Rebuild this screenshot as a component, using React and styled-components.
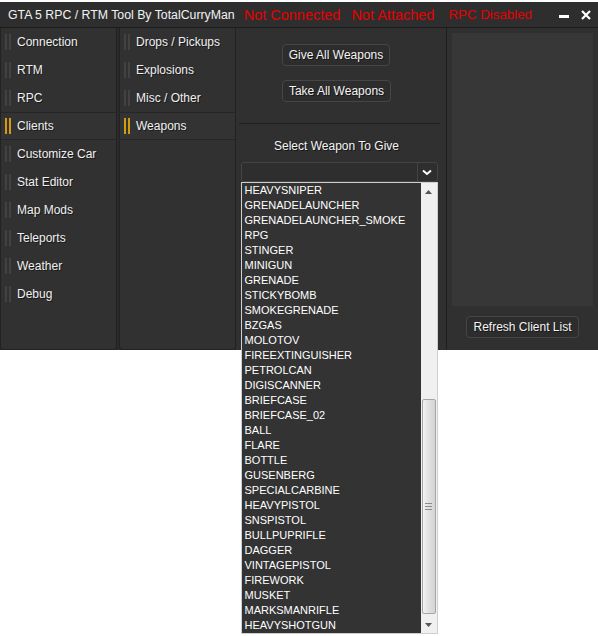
import React from 'react';
import styled, { createGlobalStyle } from 'styled-components';

const GlobalStyle = createGlobalStyle`
  html, body {
    margin: 0;
    padding: 0;
    background: #ffffff;
  }
  body {
    font-family: "Liberation Sans", Arial, sans-serif;
  }
`;

const Page = styled.div`
  min-height: 636px;
  padding-top: 2px;
  box-sizing: border-box;
  background: #ffffff;
`;

const Window = styled.div`
  position: relative;
  width: 598px;
  height: 348px;
  background: #2a2a2a;
  display: flex;
  flex-direction: column;
`;

const TitleBar = styled.div`
  height: 25px;
  display: flex;
  align-items: center;
  padding-left: 8px;
  background: #2e2e2e;
  border-bottom: 1px solid #1c1c1c;
  color: #f2f2f2;
  font-size: 12.3px;
`;

const Title = styled.span`
  margin-right: 9px;
  white-space: nowrap;
`;

const Status = styled.span`
  color: #e60000;
  font-size: ${(p) => p.$size || 14.5}px;
  margin-right: ${(p) => p.$mr || 0}px;
  white-space: nowrap;
`;

const WinControls = styled.div`
  margin-left: auto;
  display: flex;
  align-items: center;
  gap: 12px;
  padding-right: 7px;
`;

const Body = styled.div`
  flex: 1;
  display: flex;
`;

const NavPanel = styled.div`
  width: 115px;
  margin-right: ${(p) => p.$mr || 0}px;
  background: #313131;
  border: 1px solid #222222;
  border-top: none;
  border-radius: 0 0 4px 4px;
  display: flex;
  flex-direction: column;
`;

const NavItem = styled.div`
  height: 28px;
  box-sizing: border-box;
  display: flex;
  align-items: center;
  padding-left: 4px;
  color: #f0f0f0;
  font-size: 12px;
  white-space: nowrap;
  text-shadow: 1px 1px 0 #1a1a1a;
  background: ${(p) => (p.$active ? '#333333' : 'transparent')};
  border-top: 1px solid ${(p) => (p.$active ? '#262626' : 'transparent')};
  border-bottom: 1px solid ${(p) => (p.$active ? '#262626' : 'transparent')};
`;

const Bars = styled.span`
  display: flex;
  gap: 2px;
  margin-right: 6px;
  span {
    width: 2px;
    height: 16px;
    background: ${(p) => (p.$active ? '#d39b12' : '#424242')};
  }
`;

const Main = styled.div`
  width: 211px;
  border-right: 1px solid #1e1e1e;
  background: #303030;
  display: flex;
  flex-direction: column;
  align-items: center;
  padding: 16px 9px 0 5px;
  box-sizing: border-box;
`;

const Button = styled.div`
  height: 22px;
  box-sizing: border-box;
  padding: 0 6px;
  display: flex;
  align-items: center;
  background: #2d2d2d;
  border: 1px solid #464646;
  border-radius: 4px;
  color: #f4f4f4;
  font-size: 12px;
  text-shadow: 1px 1px 0 #151515;
  margin-top: ${(p) => p.$mt || 0}px;
  margin-right: ${(p) => p.$shift || 0}px;
  white-space: nowrap;
`;

const Separator = styled.div`
  width: 201px;
  height: 1px;
  background: #1f1f1f;
  margin-top: 21px;
`;

const Label = styled.div`
  margin-top: 15px;
  margin-right: 5px;
  line-height: 14px;
  color: #f4f4f4;
  font-size: 12px;
  text-shadow: 1px 1px 0 #151515;
`;

const ComboWrap = styled.div`
  position: relative;
  margin-top: 9px;
  width: 197px;
`;

const Combo = styled.div`
  height: 20px;
  box-sizing: border-box;
  display: flex;
  background: #2e2e2e;
  border: 1px solid #444444;
  border-radius: 3px;
`;

const ComboField = styled.div`
  flex: 1;
  border-right: 1px solid #444444;
`;

const ComboButton = styled.div`
  width: 19px;
  display: flex;
  align-items: center;
  justify-content: center;
`;

const DropList = styled.div`
  position: absolute;
  left: 0;
  top: 20px;
  width: 197px;
  height: 452px;
  box-sizing: border-box;
  border: 1px solid #cfcfcf;
  background: #333333;
  display: flex;
  z-index: 5;
`;

const Items = styled.div`
  flex: 1;
  overflow: hidden;
`;

const Item = styled.div`
  height: 15px;
  line-height: 15px;
  padding-left: 3px;
  color: #ffffff;
  font-size: 11px;
  white-space: nowrap;
`;

const ScrollBar = styled.div`
  width: 16px;
  background: #f0f0f0;
  display: flex;
  flex-direction: column;
  align-items: center;
`;

const Arrow = styled.div`
  height: 17px;
  display: flex;
  align-items: center;
  justify-content: center;
`;

const Track = styled.div`
  flex: 1;
  width: 100%;
  display: flex;
  flex-direction: column;
`;

const Thumb = styled.div`
  margin-top: ${(p) => p.$top}px;
  height: ${(p) => p.$h}px;
  width: 14px;
  margin-left: 1px;
  box-sizing: border-box;
  border: 1px solid #a6a6a6;
  border-radius: 2px;
  background: linear-gradient(to right, #f2f2f2, #e0e0e0 50%, #d4d4d4);
  display: flex;
  align-items: center;
  justify-content: center;
`;

const RightPanel = styled.div`
  flex: 1;
  display: flex;
  flex-direction: column;
  align-items: center;
  padding: 5px 5px 0 5px;
  background: #303030;
`;

const ClientBox = styled.div`
  align-self: stretch;
  height: 273px;
  background: #373737;
`;

const menu1 = ['Connection', 'RTM', 'RPC', 'Clients', 'Customize Car', 'Stat Editor', 'Map Mods', 'Teleports', 'Weather', 'Debug'];
const menu2 = ['Drops / Pickups', 'Explosions', 'Misc / Other', 'Weapons'];
const weapons = [
  'HEAVYSNIPER', 'GRENADELAUNCHER', 'GRENADELAUNCHER_SMOKE', 'RPG', 'STINGER', 'MINIGUN', 'GRENADE',
  'STICKYBOMB', 'SMOKEGRENADE', 'BZGAS', 'MOLOTOV', 'FIREEXTINGUISHER', 'PETROLCAN', 'DIGISCANNER',
  'BRIEFCASE', 'BRIEFCASE_02', 'BALL', 'FLARE', 'BOTTLE', 'GUSENBERG', 'SPECIALCARBINE', 'HEAVYPISTOL',
  'SNSPISTOL', 'BULLPUPRIFLE', 'DAGGER', 'VINTAGEPISTOL', 'FIREWORK', 'MUSKET', 'MARKSMANRIFLE', 'HEAVYSHOTGUN',
];

function Nav({ items, active, mr }) {
  return (
    <NavPanel $mr={mr}>
      {items.map((name) => (
        <NavItem key={name} $active={name === active}>
          <Bars $active={name === active}>
            <span />
            <span />
          </Bars>
          {name}
        </NavItem>
      ))}
    </NavPanel>
  );
}

export default function App() {
  return (
    <Page>
      <GlobalStyle />
      <Window>
        <TitleBar>
          <Title>GTA 5 RPC / RTM Tool By TotalCurryMan</Title>
          <Status $mr={11}>Not Connected</Status>
          <Status $mr={14}>Not Attached</Status>
          <Status $size={13.3}>RPC Disabled</Status>
          <WinControls>
            <svg width="10" height="10" viewBox="0 0 10 10">
              <rect x="0" y="5" width="10" height="3" fill="#ffffff" />
            </svg>
            <svg width="10" height="10" viewBox="0 0 10 10">
              <path d="M1 1 L9 9 M9 1 L1 9" stroke="#ffffff" strokeWidth="2.2" />
            </svg>
          </WinControls>
        </TitleBar>
        <Body>
          <Nav items={menu1} active="Clients" mr={2} />
          <Nav items={menu2} active="Weapons" />
          <Main>
            <Button $shift={6}>Give All Weapons</Button>
            <Button $mt={14} $shift={5}>Take All Weapons</Button>
            <Separator />
            <Label>Select Weapon To Give</Label>
            <ComboWrap>
              <Combo>
                <ComboField />
                <ComboButton>
                  <svg width="10" height="7" viewBox="0 0 10 7">
                    <path d="M1 1.5 L5 5 L9 1.5" stroke="#ffffff" strokeWidth="2" fill="none" />
                  </svg>
                </ComboButton>
              </Combo>
              <DropList>
                <Items>
                  {weapons.map((w) => (
                    <Item key={w}>{w}</Item>
                  ))}
                </Items>
                <ScrollBar>
                  <Arrow>
                    <svg width="7" height="4" viewBox="0 0 7 4">
                      <path d="M0 4 L3.5 0 L7 4 Z" fill="#555555" />
                    </svg>
                  </Arrow>
                  <Track>
                    <Thumb $top={199} $h={215}>
                      <svg width="7" height="7" viewBox="0 0 7 7">
                        <path d="M0 0.5 H7 M0 3.5 H7 M0 6.5 H7" stroke="#8a8a8a" strokeWidth="1" />
                      </svg>
                    </Thumb>
                  </Track>
                  <Arrow>
                    <svg width="7" height="4" viewBox="0 0 7 4">
                      <path d="M0 0 L3.5 4 L7 0 Z" fill="#555555" />
                    </svg>
                  </Arrow>
                </ScrollBar>
              </DropList>
            </ComboWrap>
          </Main>
          <RightPanel>
            <ClientBox />
            <Button $mt={10}>Refresh Client List</Button>
          </RightPanel>
        </Body>
      </Window>
    </Page>
  );
}
